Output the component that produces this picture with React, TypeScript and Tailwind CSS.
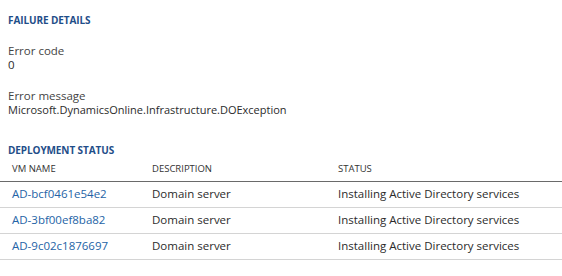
const rows = [
  { name: "AD-bcf0461e54e2", description: "Domain server", status: "Installing Active Directory services" },
  { name: "AD-3bf00ef8ba82", description: "Domain server", status: "Installing Active Directory services" },
  { name: "AD-9c02c1876697", description: "Domain server", status: "Installing Active Directory services" },
];

export default function App() {
  return (
    <div className="h-[276px] w-[562px] overflow-hidden bg-white font-['Open_Sans',sans-serif] text-[#2b2b2b]">
      {/* Failure details */}
      <section className="px-2 pt-[14px]">
        <h2 className="text-[10px] font-bold uppercase leading-[13px] tracking-[-0.1px] text-[#1f4e89]">Failure details</h2>
        <div className="mt-[17px] text-[11.5px] leading-[14px]">
          <p className="text-[#444]">Error code</p>
          <p>0</p>
        </div>
        <div className="mt-[17px] leading-[14px]">
          <p className="text-[11.5px] text-[#444]">Error message</p>
          <p className="text-[11px]">Microsoft.DynamicsOnline.Infrastructure.DOException</p>
        </div>
      </section>

      {/* Deployment status */}
      <section className="pt-[27px]">
        <h2 className="px-2 text-[10px] font-bold uppercase leading-[13px] tracking-[-0.1px] text-[#1f4e89]">Deployment status</h2>
        <table className="w-full text-left">
          <thead>
            <tr className="h-[24px] border-b border-[#6a6a6a] text-[9.5px] uppercase text-[#333]">
              <th className="w-[152px] pl-3 font-normal">VM Name</th>
              <th className="w-[186px] font-normal">Description</th>
              <th className="font-normal">Status</th>
            </tr>
          </thead>
          <tbody className="text-[11.5px]">
            {rows.map((row) => (
              <tr key={row.name} className="h-[26px] border-b border-[#d4d4d4]">
                <td className="pl-3 text-[#2463a6]">{row.name}</td>
                <td>{row.description}</td>
                <td>{row.status}</td>
              </tr>
            ))}
          </tbody>
        </table>
      </section>
    </div>
  );
}
